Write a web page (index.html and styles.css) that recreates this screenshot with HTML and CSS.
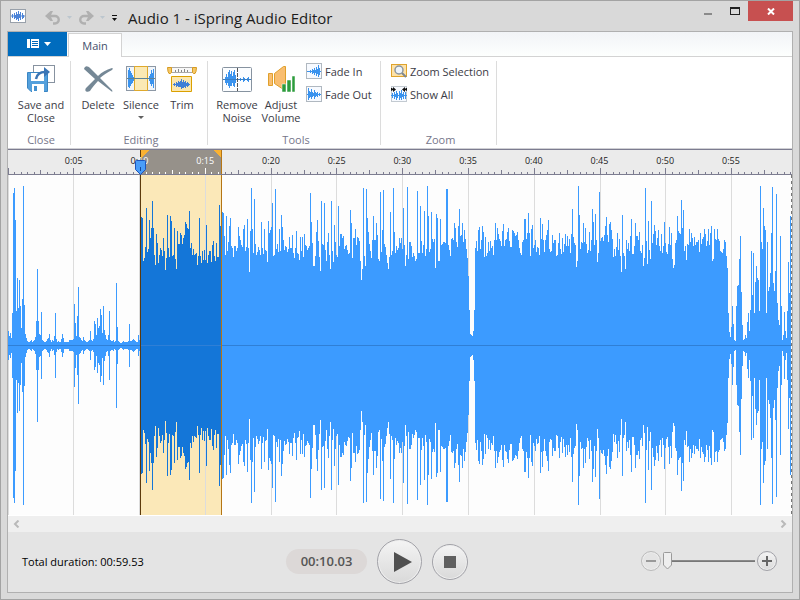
FILE: index.html
```
<!DOCTYPE html>
<html lang="en">
<head>
<meta charset="utf-8">
<title>Audio 1 - iSpring Audio Editor</title>
<link rel="stylesheet" href="styles.css">
</head>
<body>
<div class="window">
  <header class="titlebar">
    <svg class="app-icon" width="16" height="14"><rect x=".5" y=".5" width="15" height="13" fill="#fff" stroke="#98a0aa"/><path fill="#4c84d8" d="M1 6.500h14v1H1zM2 5h1v4H2zM4 4h1v6H4zM5 6h1v3H5zM6 3h1v8H6zM7 5h1v5H7zM8 2h1v10H8zM9 5h1v4H9zM10 3h1v8h-1zM12 4h1v6h-1zM13 6h1v3h-1z"/></svg>
    <button class="quick undo" aria-label="Undo"><svg width="16" height="14"><path d="M4 5h6a3.500 3.500 0 0 1 0 7.500H8" fill="none" stroke="#b0b0b0" stroke-width="2.400"/><path fill="#b0b0b0" d="M0 5 5.500 0H8L5.500 5 8 10H5.500z"/></svg></button>
    <button class="quick caret" aria-label="Undo history"><svg width="5" height="4"><path d="M0 0h5L2.500 3z" fill="#bcc6ce"/></svg></button>
    <button class="quick redo" aria-label="Redo"><svg width="16" height="14"><path d="M12 5H6a3.500 3.500 0 0 0 0 7.500h2" fill="none" stroke="#b0b0b0" stroke-width="2.400"/><path fill="#b0b0b0" d="m16 5-5.500-5H8l2.500 5L8 10h2.500z"/></svg></button>
    <button class="quick caret" aria-label="Redo history"><svg width="5" height="4"><path d="M0 0h5L2.500 3z" fill="#bcc6ce"/></svg></button>
    <button class="quick more" aria-label="Customize toolbar"><svg width="5" height="6"><path d="M0 0h5v1H0zM0 3h5L2.500 6z" fill="#111"/></svg></button>
    <h1>Audio 1 - iSpring Audio Editor</h1>
    <div class="controls">
      <button aria-label="Minimize" class="min"><svg width="8" height="2"><path d="M0 0h8v2H0z" fill="#8a8a8a"/></svg></button>
      <button aria-label="Maximize" class="max"><svg width="10" height="8"><path fill-rule="evenodd" d="M0 0h10v8H0zM1 2v5h8V2z" fill="#222"/></svg></button>
      <button aria-label="Close" class="close"><svg width="8" height="7"><path d="M1 .5 7 6.500M7 .5 1 6.500" stroke="#fff" stroke-width="2"/></svg></button>
    </div>
  </header>

  <main class="client">
    <nav class="tabs">
      <button class="file" aria-label="File menu">
        <svg width="25" height="10"><path fill="#fff" d="M0 0h3v9H0zM4 0h8v9H4z"/><path fill="#0069bb" d="M5 2h6v1H5zM5 4h6v1H5zM5 6h6v1H5z"/><path fill="#fff" d="M17 3h7l-3.500 4z"/></svg>
      </button>
      <button class="tab">Main</button>
    </nav>

    <section class="ribbon">
      <div class="group g-close">
        <div class="tools">
          <button class="tool w58">
            <svg width="28" height="28"><rect x="6.500" y=".5" width="21" height="17" fill="#fff" stroke="#8792a0"/><path fill="#54a0dc" stroke="#3a86c4" d="M.5 7.500h20v19H4L.5 23z"/><path fill="#fff" d="M4 8h13v8H4zM5 19h12v8H5z"/><path fill="#4491cf" d="M7 21h3v5H7z"/><path fill="#fff" d="M7 1h20v6H7z"/><path fill="none" stroke="#3a75b5" stroke-width="2.500" d="M9 14c1-5 4-7 9-7"/><path fill="#3a75b5" d="m17 2 6 5-6 5z"/></svg>
            <span>Save and<br>Close</span></button>
        </div>
        <h2>Close</h2>
      </div>
      <div class="group g-editing">
        <div class="tools">
          <button class="tool w40">
            <svg width="30" height="28"><path fill="#758896" d="M1 4c1-4 4-3 6-1l8 8c4-4 8-6 14-8 1 0 1 1 0 2-5 3-9 5-12 8l12 12c1 2 0 2-1 1L15 16c-3 3-6 7-8 10-3 2-6 0-4-3l9-9z"/></svg>
            <span>Delete</span></button>
          <button class="tool w46">
            <svg width="30" height="28"><rect x=".5" y="1.500" width="29" height="24" fill="#f0f5fa" stroke="#8d98a5"/><path fill="#fbe9b4" stroke="#dfa92c" d="M8.500 1.500h13v24h-13z"/><path fill="#3a93ee" d="M2 5h1v17H2zM3 3h1v20H3zM4 6h1v15H4zM5 8h1v11H5zM6 10h1v8H6zM7 12h1v4H7zM23 11h1v5h-1zM24 9h1v10h-1zM25 5h1v16h-1zM26 8h1v11h-1zM27 4h1v19h-1z"/><path stroke="#5b8399" d="M1 13.500h28"/></svg>
            <span>Silence</span><i class="drop"></i></button>
          <button class="tool w36">
            <svg width="30" height="28"><path fill="#f8f8f8" stroke="#aaa" d="M4.500 2.500h21v5h-21z"/><path stroke="#888" d="M8.500 5v2M11.500 4v3M14.500 5v2M17.500 4v3M20.500 5v2"/><path fill="#f5c868" stroke="#d79b20" d="M.5 2.500h4v5l-1 1H2l-1-2zM29.500 2.500h-4v5l1 1H28l1-2z"/><path fill="#fbe7b0" stroke="#dba000" d="M4.500 11.500h20v15h-20z"/><path fill="#3f7fd6" d="M6 19h17v1H6zM7 18h1v3H7zM9 17h1v5H9zM10 18h1v3h-1zM11 16h1v6h-1zM12 17h1v5h-1zM14 14h1v10h-1zM13 16h1v6h-1zM15 17h1v6h-1zM16 15h1v8h-1zM17 17h1v5h-1zM18 16h1v7h-1zM19 18h1v3h-1zM20 17h1v5h-1zM21 18h1v3h-1z"/></svg>
            <span>Trim</span></button>
        </div>
        <h2>Editing</h2>
      </div>
      <div class="group g-tools">
        <div class="tools">
          <button class="tool w44">
            <svg width="30" height="28"><rect x=".5" y="2.500" width="29" height="24" rx="1" fill="#fbfdff" stroke="#8793a0"/><path fill="#3a93ee" d="M3 12h1v6H3zM4 9h1v11H4zM5 12h1v6H5zM6 7h1v14H6zM7 5h1v18H7zM8 9h1v12H8zM9 6h1v15H9zM10 11h1v7h-1zM11 7h1v14h-1zM12 5h1v17h-1zM13 10h1v8h-1zM18 13h1v3h-1zM21 12h1v5h-1zM22 13h1v3h-1zM25 13h1v3h-1zM26 12h1v5h-1z"/><path stroke="#397fc4" d="M1 14.500h28"/><path stroke="#555" stroke-dasharray="4 1" d="M15.500 3v23"/></svg>
            <span>Remove<br>Noise</span></button>
          <button class="tool w44">
            <svg width="28" height="28"><path fill="#f9be70" stroke="#dfa02c" d="M1.500 8.500h4v12h-4zM7.500 8.500l9-7h2v23h-2l-9-6z"/><path fill="#2c9c3c" stroke="#fff" stroke-width=".5" d="M15 19h4v8h-4zM20 15h4v12h-4zM25 11h3v16h-3z"/></svg>
            <span>Adjust<br>Volume</span></button>
          <div class="smalls">
            <button class="small"><svg width="16" height="16"><rect x=".5" y=".5" width="15" height="15" fill="#f7faff" stroke="#b0b8c0"/><path fill="#3a93ee" d="M1 8h14v1H1zM4 7h1v3H4zM6 6h1v5H6zM7 7h1v3H7zM8 5h1v7H8zM9 7h1v3H9zM10 4h1v9h-1zM11 6h1v5h-1zM12 2h1v12h-1zM13 5h1v7h-1z"/></svg><span>Fade In</span></button>
            <button class="small"><svg width="16" height="16"><rect x=".5" y=".5" width="15" height="15" fill="#f7faff" stroke="#b0b8c0"/><path fill="#3a93ee" d="M1 8h14v1H1zM2 2h1v12H2zM3 5h1v7H3zM4 6h1v5H4zM5 3h1v10H5zM6 6h1v5H6zM7 7h1v3H7zM8 4h1v9H8zM9 6h1v5H9zM10 7h1v3h-1zM11 6h1v5h-1zM13 7h1v3h-1z"/></svg><span>Fade Out</span></button>
          </div>
        </div>
        <h2>Tools</h2>
      </div>
      <div class="group g-zoom">
        <div class="tools">
          <div class="smalls">
            <button class="small"><svg width="16" height="16"><rect x=".5" y="1.500" width="15" height="12" fill="#fde2a8" stroke="#dfa32c"/><circle cx="8" cy="7" r="4" fill="#eef4fa" stroke="#8b95a0" stroke-width="1.500"/><path stroke="#7d8791" stroke-width="2" d="m11 10 4 4"/></svg><span>Zoom Selection</span></button>
            <button class="small"><svg width="16" height="16"><rect x=".5" y=".5" width="15" height="15" fill="#f7faff" stroke="#c3cad1"/><path fill="#3a93ee" d="M0 9h16v1H0zM1 7h1v5H1zM3 6h1v7H3zM4 8h1v3H4zM5 5h1v9H5zM6 7h1v5H6zM8 5h1v9H8zM9 7h1v5H9zM10 4h1v10h-1zM11 8h1v3h-1zM12 6h1v7h-1zM14 6h1v7h-1z"/><path fill="#111" d="M0 2h1l1 1V1l3 2.500L2 6V4L0 5zM16 2h-1l-1 1V1l-3 2.500L14 6V4l2 1z"/></svg><span>Show All</span></button>
          </div>
        </div>
        <h2>Zoom</h2>
      </div>
    </section>

    <section class="editor">
      <div class="ruler">
        <svg id="ticks" viewBox="0 0 784 24" preserveAspectRatio="none" shape-rendering="crispEdges">
          <path fill="#96918a" d="M133 0h80v24h-80z"/>
          <path fill="#f9b233" d="M133 0h8l-8 8zM205 0h8v8z"/>
          <path id="tick-dark" fill="#7c7c90"/>
          <path id="tick-light" fill="#fff"/>
          <path fill="#5c3a0c" d="M132 0h1v24h-1z"/>
          <path fill="#b57514" d="M213 0h1v24h-1z"/>
        </svg>
        <div class="labels">
          <span>0:05</span><span>0:<b>10</b></span><span><b>0:15</b></span><span>0:20</span><span>0:25</span><span>0:30</span><span>0:35</span><span>0:40</span><span>0:45</span><span>0:50</span><span>0:55</span>
        </div>
        <svg class="playhead" width="12" height="15"><path fill="#4a9df8" stroke="#1d55bd" d="M.5 1.500q0-1 1-1h8q1 0 1 1v8l-5 5-5-5z"/><path stroke="#174a9c" d="M5.500 7v4"/></svg>
      </div>
      <svg class="waveform" viewBox="0 0 784 340" preserveAspectRatio="none" shape-rendering="crispEdges" role="img" aria-label="Waveform">
        <path fill="#fbe8b8" d="M133 0h80v340h-80z"/>
        <path id="grid" fill="#dcdcdc"/>
        <path id="wave-all" fill="#3c9bff"/>
        <path id="wave-sel" fill="#1476d8"/>
        <path fill="#2f7fd6" d="M0 170h783v1H0z"/>
        <path fill="#5c3a0c" d="M132 0h1v340h-1z"/>
        <path fill="#b57514" d="M213 0h1v340h-1z"/>
        <path stroke="#777" stroke-dasharray="3 3" d="M783.500 0v340"/>
      </svg>
    </section>

    <div class="scroll">
      <button aria-label="Scroll left"><svg width="7" height="8"><path d="M5.500.5 2 4l3.500 3.500" fill="none" stroke="#b9b9b9" stroke-width="2"/></svg></button>
      <button aria-label="Scroll right"><svg width="7" height="8"><path d="M1.500.5 5 4 1.500 7.500" fill="none" stroke="#b9b9b9" stroke-width="2"/></svg></button>
    </div>

    <footer class="player">
      <div class="side">
        <span class="total">Total duration: 00:59.53</span>
        <span class="time">00:10.03</span>
      </div>
      <button class="round play" aria-label="Play"><svg width="18" height="20"><path fill="#505050" d="M0 0l18 10L0 20z"/></svg></button>
      <div class="side">
        <button class="round stop" aria-label="Stop"><svg width="12" height="12"><path fill="#606060" d="M0 0h12v12H0z"/></svg></button>
        <div class="zoomer">
          <button class="round out" aria-label="Zoom out"><svg width="10" height="10"><path fill="#999" d="M0 4h10v2H0z"/></svg></button>
          <input type="range" min="0" max="100" value="0" aria-label="Zoom level">
          <button class="round in" aria-label="Zoom in"><svg width="10" height="10"><path fill="#666" d="M0 4h4V0h2v4h4v2H6v4H4V6H0z"/></svg></button>
        </div>
      </div>
    </footer>
  </main>
</div>
<script src="wave.js"></script>
</body>
</html>
```
FILE: styles.css
```
* { box-sizing: border-box; }
body {
  margin: 0;
  font: 11px/13px "Open Sans", "Noto Sans", sans-serif;
  color: #3c3c46;
}
button {
  margin: 0; padding: 0; border: 0;
  background: none; font: inherit; color: inherit;
}
svg { display: block; flex: none; }
h1, h2 { margin: 0; font-weight: 400; }

.window {
  min-height: 100vh;
  display: flex; flex-direction: column;
  padding: 0 6px 6px;
  background: #d9d9d9;
  border: 1px solid #a3a3a3;
}
.titlebar { display: flex; align-items: center; height: 30px; padding: 4px 0 0 3px; }
.app-icon { margin-bottom: 4px; }
.quick.undo { margin-left: 19px; }
.quick.redo { margin-left: 6px; }
.quick.caret { margin-left: 6px; }
.quick.more { margin-left: 7px; }
.titlebar h1 { margin-left: 11px; font-size: 15px; line-height: 20px; color: #1c1c1c; }
.controls { display: flex; align-self: flex-start; margin: -4px 0 0 auto; }
.controls button { display: flex; justify-content: center; height: 20px; }
.min { width: 26px; padding-top: 12px; }
.max { width: 27px; padding-top: 6px; }
.controls .close { width: 45px; align-items: center; background: #c75050; }

.client {
  flex: 1;
  display: flex; flex-direction: column;
  background: #fff;
  border: 1px solid #b0b0b0;
}
.tabs {
  display: flex; gap: 1px; height: 25px;
  background: linear-gradient(#f2f4f7, #fdfffe);
  border-bottom: 1px solid #d3d3d3;
}
.file {
  display: flex; align-items: center; justify-content: center;
  width: 59px; height: 24px; padding-left: 4px; background: #006cbe;
}
.tab {
  width: 54px; height: 24px; margin-top: 1px;
  background: #fff; border: 1px solid #d3d3d3; border-bottom: 0;
  color: #44506c;
}

.ribbon { display: flex; padding: 4px 0 3px; border-bottom: 1px solid #d0d0d4; }
.group {
  display: flex; flex-direction: column; justify-content: space-between;
  height: 84px; padding-left: 4px;
  border-right: 1px solid #dcdcdc;
}
.group h2 { font-size: 11px; line-height: 10px; text-align: center; color: #76768a; }
.tools { display: flex; align-items: flex-start; padding-left: 3px; }
.g-close { width: 63px; }
.g-close .tools { padding-left: 0; }
.g-editing { width: 137px; }
.g-tools { width: 173px; }
.g-zoom { width: 116px; }
.tool { display: flex; flex-direction: column; align-items: center; padding-top: 4px; white-space: nowrap; }
.tool span { margin-top: 5px; }
.w58 { width: 58px; }
.w46 { width: 46px; }
.w44 { width: 44px; }
.w40 { width: 40px; }
.w36 { width: 36px; }
.drop { margin-top: 5px; border: 3px solid transparent; border-top-color: #606060; border-bottom: 0; }
.smalls { display: flex; flex-direction: column; gap: 7px; padding: 2px 0 0 3px; }
.small { display: flex; align-items: center; gap: 3px; white-space: nowrap; }

.editor { display: flex; flex-direction: column; flex: 1; min-height: 366px; }
.ruler {
  position: relative; height: 26px;
  background: #ebebeb;
  border-top: 1px solid #7c7c90; border-bottom: 1px solid #7c7c90;
}
#ticks { width: 100%; height: 24px; }
.labels {
  position: absolute; inset: 0 0 auto 0;
  display: flex; padding-left: 4.196%;
  font-size: 9px; line-height: 21px; color: #1c1c1c;
}
.labels span { flex: 0 0 8.75%; text-align: center; }
.labels b { font-weight: 400; color: #fff; }
.playhead { position: absolute; left: 16.2%; bottom: -1px; }
.waveform { width: 100%; flex: 1; min-height: 0; background: #fdfdfd; }

.scroll {
  display: flex; align-items: center; justify-content: space-between;
  height: 17px; padding: 0 5px;
  background: #efefef; border-top: 1px solid #fff;
}

.player {
  display: grid; grid-template-columns: 1fr 45px 1fr; gap: 10px; align-items: center;
  height: 60px; padding: 0 15px 1px 14px;
  background: #e4e4e4;
}
.side { display: flex; align-items: center; justify-content: space-between; }
.total { color: #000; }
.time {
  width: 81px; border-radius: 13px;
  font-size: 13px; line-height: 25px; font-weight: 600; text-align: center;
  background: #dcd8d7; color: #555;
}
.round {
  display: flex; align-items: center; justify-content: center;
  border: 1px solid #a2a2a8; border-radius: 50%;
  background: linear-gradient(#f4f4f4, #d9d9d9);
  box-shadow: 0 0 0 1px #eee inset;
}
.play { width: 45px; height: 45px; padding-left: 6px; }
.stop { width: 36px; height: 36px; }
.zoomer { display: flex; align-items: center; gap: 2px; padding-bottom: 2px; }
.out, .in { width: 20px; height: 20px; }
.out { border-color: #bbb; background: #e4e4e4; }
.zoomer input {
  width: 92px; height: 20px; margin: 0;
  appearance: none; background: none;
}
.zoomer input::-webkit-slider-runnable-track {
  height: 2px; background: #8a8a8a; border-bottom: 1px solid #777;
}
.zoomer input::-webkit-slider-thumb {
  appearance: none;
  width: 9px; height: 18px; margin-top: -8px;
  background: url("data:image/svg+xml,%3Csvg xmlns='http://www.w3.org/2000/svg' width='9' height='18'%3E%3Cpath d='M.5 1.5q0-1 1-1h6q1 0 1 1V13l-4 4-4-4z' fill='%23eeeeee' stroke='%239a9a9a'/%3E%3C/svg%3E");
}
```
FILE: wave.js
```
// Peak amplitude of each sample column, from the left edge of the track.
const intro = [14,9,12,7,32,152,157,125,34,67,37,65,39,17,46,159,40,11,7,4,3,3,4,5,3,4,5,8,24,76,24,11,10,33,5,4,3,3,4,6,7,11,5,3,5,4,9,32,6,3,4,3,3,6,11,7,3,3,3,3,3,5,5,5,5,6,41,22,9,29,58,8,7,5,4,8,5,4,3,3,4,5,14,5,4,6,24,21,10,27,17,19,36,30,12,39,15,10,6,5,10,34,5,4,4,5,3,4,62,18,4,3,2,2,3,4,3,3,3,3,4,21,4,4,5,6,5,4,3,3,10,5,128];
const selected = [128,127,84,87,98,137,93,96,125,107,117,144,117,90,80,111,102,82,90,97,95,89,107,94,75,87,130,97,88,129,124,89,90,117,86,76,114,101,101,112,110,101,107,110,123,121,117,116,134,97,102,90,96,90,91,92,80,89,127,89,82,94,85,95,85,120,82,90,94,94,83,100,104,89,84,102,88,88,140,119];
const rest = [133,
133,132,109,90,129,94,103,119,127,99,97,88,99,99,94,97,118,109,105,100,98,116,120,94,98,126,97,73,114,157,116,92,146,101,90,93,98,95,90,123,97,91,116,95,94,83,124,112,115,118,142,89,90,156,96,101,93,116,94,130,118,105,95,99,98,93,96,108,97,97,110,92,87,97,114,92,91,85,
108,94,108,88,111,100,99,95,97,99,152,123,102,79,79,89,113,125,104,88,74,144,101,100,142,95,84,103,112,90,76,144,94,83,120,103,90,88,139,99,111,111,107,109,96,99,100,95,91,92,135,122,87,107,107,116,100,108,107,104,84,65,76,157,89,79,156,127,113,101,94,87,105,129,105,105,122,110,86,84,153,93,115,155,101,98,90,82,76,88,133,90,94,157,113,92,99,95,97,107,
102,107,96,137,100,79,90,158,86,103,103,99,88,92,89,84,86,154,92,92,139,104,92,100,134,89,96,159,129,93,96,133,106,103,106,77,131,127,84,84,126,100,101,103,103,102,156,156,100,95,89,106,107,105,122,117,103,98,119,136,109,110,122,103,115,106,96,87,69,35,11,10,9,14,35,97,104,94,115,118,96,105,119,113,88,108,89,92,103,94,104,97,99,90,105,122,105,117,111,106,
104,99,114,121,99,105,106,113,117,104,98,98,115,114,112,109,110,113,105,97,92,90,103,105,126,126,106,112,132,112,89,116,120,97,100,105,93,98,97,90,127,106,121,105,93,105,110,115,125,96,93,94,110,102,105,105,89,90,102,112,96,91,107,93,101,111,99,109,99,106,92,111,136,108,102,100,78,84,159,130,96,103,102,122,103,117,101,92,95,113,94,105,136,123,100,131,105,83,92,153,
104,107,108,104,110,119,128,110,103,121,123,115,106,88,96,89,98,112,95,106,89,73,130,92,89,76,105,96,102,94,109,126,91,91,99,122,109,109,105,113,94,92,100,79,87,157,104,81,124,95,86,144,102,111,120,114,100,107,115,99,94,111,92,99,123,102,93,91,101,118,100,112,86,77,80,102,105,129,114,112,111,145,117,135,94,99,85,101,100,116,103,112,107,99,108,100,103,103,105,93,
112,101,106,108,116,111,99,104,116,100,112,119,84,86,116,106,105,116,106,104,94,93,92,96,105,103,89,77,32,13,8,18,39,21,5,4,39,59,60,86,109,53,20,5,6,10,7,23,32,14,35,94,50,92,32,63,79,67,65,34,159,103,96,137,119,115,32,103,54,58,72,112,158,62,54,74,151,42,25,20,109,39,5,10,33,14,7,34,83,52,129];

const columns = (peaks, start) =>
  peaks.map((p, i) => `M${start + i} ${170 - p}h1v${p * 2 + 1}h-1z`).join("");
const set = (id, d) => document.getElementById(id).setAttribute("d", d);

set("wave-all", columns(intro, 0) + columns(rest, 213));
set("wave-sel", columns(selected, 133));

// Ruler ticks every half second, taller on 2.5 s and 5 s.
const step = 6.579;
let dark = "", light = "", grid = "";
for (let i = 0; i * step < 783; i++) {
  const x = Math.floor(i * step);
  const h = i % 10 === 0 ? 6 : i % 5 === 0 ? 4 : 2;
  const bar = `M${x} ${24 - h}h1v${h}h-1z`;
  if (x > 132 && x < 213) light += bar; else dark += bar;
  if (i % 10 === 0) grid += `M${x} 0h1v340h-1z`;
}
set("tick-dark", dark);
set("tick-light", light);
set("grid", grid);
```
